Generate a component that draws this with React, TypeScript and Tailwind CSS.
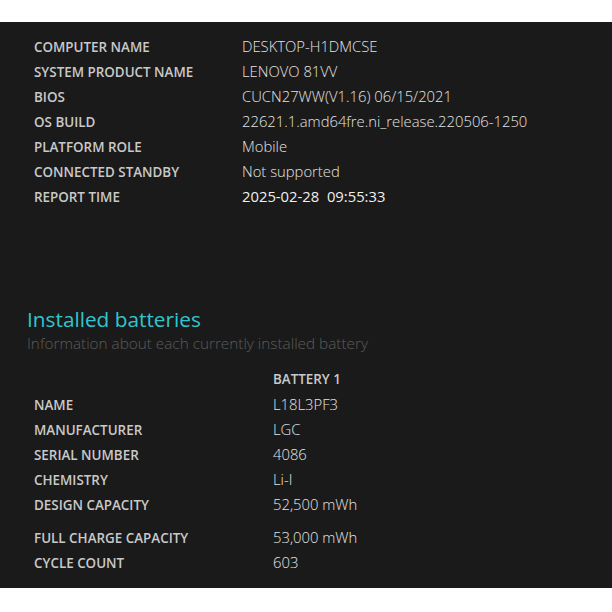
const systemInfo: [string, string][] = [
  ["COMPUTER NAME", "DESKTOP-H1DMCSE"],
  ["SYSTEM PRODUCT NAME", "LENOVO 81VV"],
  ["BIOS", "CUCN27WW(V1.16) 06/15/2021"],
  ["OS BUILD", "22621.1.amd64fre.ni_release.220506-1250"],
  ["PLATFORM ROLE", "Mobile"],
  ["CONNECTED STANDBY", "Not supported"],
];

const batteryInfo: [string, string][] = [
  ["NAME", "L18L3PF3"],
  ["MANUFACTURER", "LGC"],
  ["SERIAL NUMBER", "4086"],
  ["CHEMISTRY", "Li-I"],
  ["DESIGN CAPACITY", "52,500 mWh"],
];

function Label({ children }: { children: React.ReactNode }) {
  return (
    <span className="text-[13.4px] leading-[25px] font-semibold text-[#c9c9c9]">
      {children}
    </span>
  );
}

function Value({ children }: { children: React.ReactNode }) {
  return (
    <span className="text-[14.8px] leading-[25px] font-light text-[#e4e4e4] whitespace-pre">
      {children}
    </span>
  );
}

export default function App() {
  return (
    <div
      className="min-h-screen bg-white pt-[22px]"
      style={{ fontFamily: '"Open Sans", "Noto Sans", sans-serif' }}
    >
      <div className="h-[566px] bg-[#1a1a1a]">
        {/* System info */}
        <div className="px-[34px] pt-[12px]">
          {systemInfo.map(([label, value]) => (
            <div key={label} className="flex h-[25px] items-center">
              <div className="w-[208px]">
                <Label>{label}</Label>
              </div>
              <Value>{value}</Value>
            </div>
          ))}
          <div className="flex h-[25px] items-center">
            <div className="w-[208px]">
              <Label>REPORT TIME</Label>
            </div>
            <span className="text-[14.8px] leading-[25px] font-normal text-[#f0f0f0] whitespace-pre">
              2025-02-28  09:55:33
            </span>
          </div>
        </div>

        {/* Installed batteries */}
        <div className="pl-[27px] pt-[96px]">
          <h2 className="text-[20.8px] leading-[28px] font-normal text-[#2fc6cf]">
            Installed batteries
          </h2>
          <p className="text-[15.3px] leading-[20px] font-light text-[#5a5a5a]">
            Information about each currently installed battery
          </p>
        </div>

        <div className="px-[34px] pt-[14px]">
          <div className="flex h-[25px] items-center">
            <div className="w-[239px]" />
            <Label>BATTERY 1</Label>
          </div>
          {batteryInfo.map(([label, value]) => (
            <div key={label} className="flex h-[25px] items-center">
              <div className="w-[239px]">
                <Label>{label}</Label>
              </div>
              <Value>{value}</Value>
            </div>
          ))}
          <div className="mt-[8px] flex h-[25px] items-center">
            <div className="w-[239px]">
              <Label>FULL CHARGE CAPACITY</Label>
            </div>
            <Value>53,000 mWh</Value>
          </div>
          <div className="flex h-[25px] items-center">
            <div className="w-[239px]">
              <Label>CYCLE COUNT</Label>
            </div>
            <Value>603</Value>
          </div>
        </div>
      </div>
    </div>
  );
}
